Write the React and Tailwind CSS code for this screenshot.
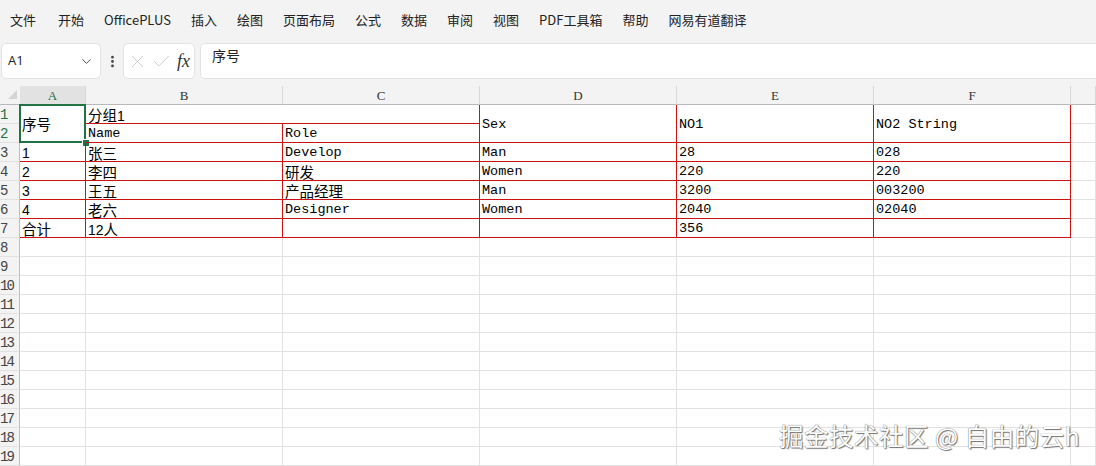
import React from "react";
import { ChevronDown, X, Check, EllipsisVertical } from "lucide-react";

const menus = ["文件", "开始", "OfficePLUS", "插入", "绘图", "页面布局", "公式", "数据", "审阅", "视图", "PDF工具箱", "帮助", "网易有道翻译"];
const cols = ["A", "B", "C", "D", "E", "F", ""];

const mono = "font-['Liberation_Mono','Noto_Sans_CJK_SC',monospace] text-[13.5px]";
const cjk = "font-['Noto_Sans_CJK_SC',sans-serif] text-[14.5px]";

// body rows 3..7 of the sheet
const body = [
  ["1", "张三", "Develop", "Man", "28", "028"],
  ["2", "李四", "研发", "Women", "220", "220"],
  ["3", "王五", "产品经理", "Man", "3200", "003200"],
  ["4", "老六", "Designer", "Women", "2040", "02040"],
  ["合计", "12人", "", "", "356", ""],
];

const isCjk = (s) => /[\u4e00-\u9fff]/.test(s);

function Cell({ children, red, className = "" }) {
  const txt = typeof children === "string" ? children : "";
  return (
    <div
      className={`relative border-r border-b px-[2px] leading-[20px] whitespace-nowrap overflow-visible text-black ${
        red ? "border-[#cc1111]" : "border-[#e1e1e1]"
      } ${isCjk(txt) ? cjk : mono} ${className}`}
    >
      {children}
    </div>
  );
}

function RowHead({ n, active }) {
  return (
    <div
      className={`border-r border-b border-r-[#bdbdbd] border-b-[#e1e1e1] bg-[#f3f3f3] leading-[20px] text-[14px] tracking-[-2px] font-['Liberation_Mono',monospace] ${
        active ? "text-[#217346]" : "text-[#444]"
      }`}
    >
      {n}
    </div>
  );
}

export default function App() {
  return (
    <div className="relative w-[1096px] h-[466px] overflow-hidden bg-white font-['Noto_Sans_CJK_SC',sans-serif]">
      {/* menu bar */}
      <div className="h-[40px] bg-[#f3f3f3] flex items-center gap-[20px] pl-[10px] text-[13px] text-[#222]">
        {menus.map((m, i) => (
          <span key={m} className={i === 0 ? "mr-[2px]" : ""}>{m}</span>
        ))}
      </div>

      {/* formula bar */}
      <div className="h-[46px] bg-[#f3f3f3] flex items-start pt-[3px] pl-[1px]">
        <div className="w-[100px] h-[36px] bg-white rounded-[5px] border border-[#e3e3e3] flex items-center justify-between pl-[6px] pr-[6px] text-[13px] text-[#222] font-['Open_Sans',sans-serif]">
          <span>A1</span>
          <ChevronDown size={15} strokeWidth={1.5} className="text-[#444]" />
        </div>
        <div className="w-[22px] h-[36px] flex items-center justify-center">
          <EllipsisVertical size={15} strokeWidth={2.5} className="text-[#444]" />
        </div>
        <div className="w-[72px] h-[36px] bg-white rounded-[5px] border border-[#e3e3e3] flex items-center gap-[3px] pl-[3px]">
          <X size={21} strokeWidth={1} className="text-[#c4c4c4] shrink-0" />
          <Check size={21} strokeWidth={1} className="text-[#c4c4c4] shrink-0" />
          <span className="ml-[2px] font-['Liberation_Serif',serif] italic text-[18px] text-[#333] leading-none">fx</span>
        </div>
        <div className="flex-1 ml-[5px] h-[36px] bg-white rounded-l-[5px] border border-r-0 border-[#e3e3e3] pl-[11px] pt-[1px] text-[14px] text-[#222]">
          序号
        </div>
      </div>

      {/* sheet grid */}
      <div className="grid grid-cols-[20px_66px_197px_197px_197px_197px_197px_1fr] auto-rows-[19px]">
        {/* column headers */}
        <div className="relative bg-[#f3f3f3] border-b border-[#b9b9b9]">
          <svg width="9" height="9" viewBox="0 0 9 9" className="absolute right-[3px] bottom-[5px]">
            <path d="M9 0 L9 9 L0 9 Z" fill="#d4d4d4" />
          </svg>
        </div>
        {cols.map((c, i) => (
          <div
            key={i}
            className={`border-b text-center leading-[20px] text-[13px] font-['Liberation_Serif',serif] ${
              i === 0
                ? "bg-[#e2e2e2] border-[#217346] text-[#217346] border-r border-r-[#d8d8d8]"
                : "bg-[#f3f3f3] border-[#b9b9b9] text-[#333] border-r border-r-[#d8d8d8]"
            }`}
          >
            {c}
          </div>
        ))}

        {/* rows 1-2: merged header block */}
        <RowHead n="1" active />
        <Cell red className="row-span-2 flex items-center">
          <span className={cjk}>序号</span>
          <div className="absolute -left-px -top-px -right-px -bottom-px border-2 border-[#217346]" />
          <div className="absolute -right-[4px] -bottom-[4px] w-[6px] h-[6px] bg-[#217346] outline outline-1 outline-white" />
        </Cell>
        <Cell red className="col-span-2">
          <span className={cjk}>分组</span>
          <span className="font-['Liberation_Sans',sans-serif] text-[14px]">1</span>
        </Cell>
        <Cell red className="row-span-2 flex items-center pt-[2px]">Sex</Cell>
        <Cell red className="row-span-2 flex items-center pt-[2px]">NO1</Cell>
        <Cell red className="row-span-2 flex items-center pt-[2px]">NO2 String</Cell>
        <Cell />
        <RowHead n="2" active />
        <Cell red>Name</Cell>
        <Cell red>Role</Cell>
        <Cell />

        {/* data rows */}
        {body.map((r, ri) => (
          <React.Fragment key={ri}>
            <RowHead n={String(ri + 3)} />
            {r.map((v, ci) => (
              <Cell key={ci} red className={ci === 0 && !isCjk(v) ? "font-['Liberation_Sans',sans-serif] text-[14px]" : ""}>
                {ci === 1 && v === "12人" ? (
                  <>
                    <span className="font-['Liberation_Sans',sans-serif] text-[14px]">12</span>
                    <span className={cjk}>人</span>
                  </>
                ) : (
                  v
                )}
              </Cell>
            ))}
            <Cell />
          </React.Fragment>
        ))}

        {/* empty rows */}
        {Array.from({ length: 12 }, (_, i) => (
          <React.Fragment key={`e${i}`}>
            <RowHead n={String(i + 8)} />
            {cols.map((_, ci) => (
              <Cell key={ci} />
            ))}
          </React.Fragment>
        ))}
      </div>

      {/* watermark */}
      <div className="absolute left-[779px] top-[418px] text-[24.5px] tracking-[0.5px] text-white font-['Noto_Sans_CJK_SC',sans-serif] [text-shadow:0_0_1px_#444,1px_1px_1px_#777]">
        掘金技术社区 @ 自由的云h
      </div>
    </div>
  );
}
